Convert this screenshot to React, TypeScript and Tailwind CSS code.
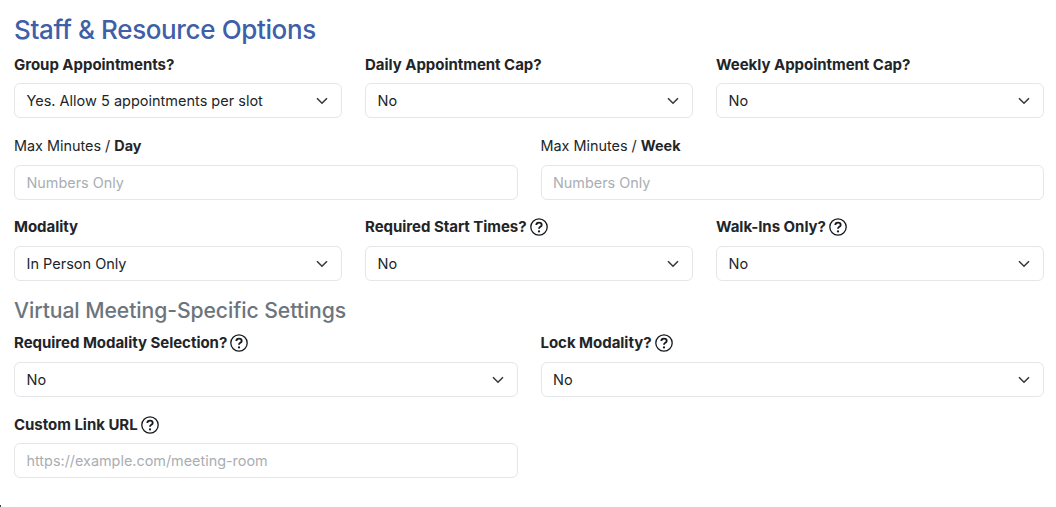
import React from 'react';

function HelpIcon() {
  return (
    <svg viewBox="0 0 18 18" className="ml-[3px] h-[18px] w-[18px] shrink-0" fill="none" stroke="#16191c">
      <circle cx="9" cy="9" r="8.2" strokeWidth="1.3" />
      <path d="M6.3 7.1c0-1.5 1.2-2.5 2.7-2.5s2.7 1 2.7 2.3c0 2-2.7 1.9-2.7 3.8" strokeWidth="1.8" />
      <circle cx="9" cy="13.4" r="1.1" fill="#16191c" stroke="none" />
    </svg>
  );
}

function Label({ text, help }: { text: string; help?: boolean }) {
  return (
    <div className="flex h-[22px] items-center text-[15px] font-bold tracking-[-0.03px] text-[#212529]">
      <span>{text}</span>
      {help && <HelpIcon />}
    </div>
  );
}

function Select({ value, top = 'mt-[8px]' }: { value: string; top?: string }) {
  return (
    <div className={`${top} flex h-[35px] items-center justify-between rounded-[6px] border border-[#e4e6e9] bg-white pl-[11.5px] pr-[13px] text-[14.5px] text-[#212529]`}>
      <span>{value}</span>
      <svg viewBox="0 0 12 8" className="h-[8px] w-[12px]" fill="none" stroke="#343a40" strokeWidth="1.6">
        <path d="M1 1.2l5 5 5-5" />
      </svg>
    </div>
  );
}

function Input({ placeholder, top = 'mt-[8px]' }: { placeholder: string; top?: string }) {
  return (
    <input
      placeholder={placeholder}
      className={`${top} block h-[35px] w-full rounded-[6px] border border-[#e4e6e9] bg-white px-[11.5px] text-[14.4px] text-[#212529] placeholder:text-[#a9aeb3]`}
    />
  );
}

function Field({ label, help, value, top }: { label: string; help?: boolean; value: string; top?: string }) {
  return (
    <div className="min-w-0 flex-1">
      <Label text={label} help={help} />
      <Select value={value} top={top} />
    </div>
  );
}

export default function App() {
  return (
    <main className="relative h-[507px] w-[1056px] overflow-hidden bg-white pl-[14px] pr-[12px] pt-[12px] font-['Inter',sans-serif]">
      <h2 className="h-[36px] text-[26px] leading-[36px] font-[550] tracking-[-0.37px] text-[#3f5fa8]">Staff &amp; Resource Options</h2>

      <div className="mt-[6px] flex gap-[23px]">
        <Field label="Group Appointments?" value="Yes. Allow 5 appointments per slot" top="mt-[7px]" />
        <Field label="Daily Appointment Cap?" value="No" top="mt-[7px]" />
        <Field label="Weekly Appointment Cap?" value="No" top="mt-[7px]" />
      </div>

      <div className="mt-[17px] flex gap-[23px]">
        <div className="min-w-0 flex-1">
          <div className="flex h-[22px] items-center text-[14.4px] text-[#212529]">
            <span className="whitespace-pre">Max Minutes / </span>
            <b className="font-bold">Day</b>
          </div>
          <Input placeholder="Numbers Only" />
        </div>
        <div className="min-w-0 flex-1">
          <div className="flex h-[22px] items-center text-[14.4px] text-[#212529]">
            <span className="whitespace-pre">Max Minutes / </span>
            <b className="font-bold">Week</b>
          </div>
          <Input placeholder="Numbers Only" />
        </div>
      </div>

      <div className="mt-[16px] flex gap-[23px]">
        <Field label="Modality" value="In Person Only" />
        <Field label="Required Start Times?" help value="No" />
        <Field label="Walk-Ins Only?" help value="No" />
      </div>

      <h3 className="mt-[14px] h-[30px] text-[21.2px] leading-[30px] font-[550] tracking-[-0.09px] text-[#6c757d]">Virtual Meeting-Specific Settings</h3>

      <div className="mt-[7px] flex gap-[23px]">
        <Field label="Required Modality Selection?" help value="No" />
        <Field label="Lock Modality?" help value="No" />
      </div>

      <div className="mt-[17px] flex gap-[23px]">
        <div className="min-w-0 flex-1">
          <Label text="Custom Link URL" help />
          <Input placeholder="https://example.com/meeting-room" top="mt-[7px]" />
        </div>
        <div className="flex-1" />
      </div>

      <div className="absolute bottom-0 left-0 h-[2px] w-[1px] bg-[#3a4048]" />
    </main>
  );
}
